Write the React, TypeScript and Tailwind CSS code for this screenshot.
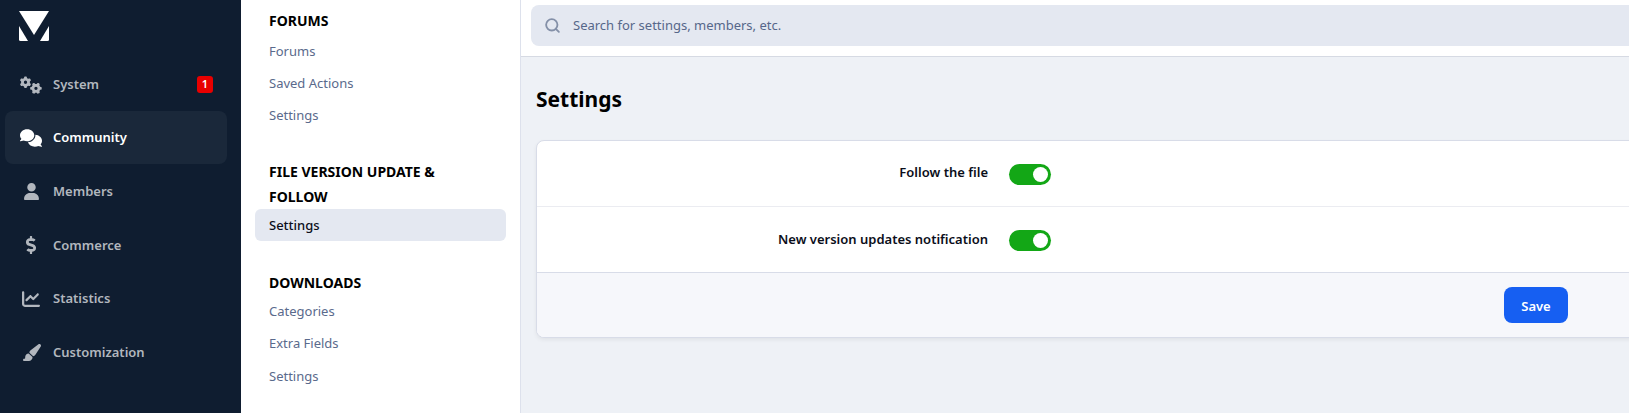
import { FaGears, FaComments, FaUser, FaChartLine, FaPaintbrush } from "react-icons/fa6";
import { FaDollarSign } from "react-icons/fa";
import { Search } from "lucide-react";
import type { ReactNode } from "react";

const font = { fontFamily: "'Noto Sans', sans-serif" };

function NavItem({ icon, label, active, badge }: { icon: ReactNode; label: string; active?: boolean; badge?: string }) {
  return (
    <div className={`mr-[14px] flex h-[53px] items-center rounded-lg pl-[8px] pr-[14px] text-[13px] font-semibold ${active ? "bg-[#1a283a] text-white" : "text-[#b2b7be]"}`}>
      <span className="flex w-[36px] items-center justify-center pt-[1px] text-[20px]">{icon}</span>
      <span className="ml-[4px] flex-1 pt-[1px]">{label}</span>
      {badge && (
        <span className="flex h-[17px] w-[16px] items-center justify-center rounded-[3px] bg-[#e80000] text-[11px] font-semibold text-white">{badge}</span>
      )}
    </div>
  );
}

function Heading({ children }: { children: ReactNode }) {
  return <div className="px-[14px] text-[14px] leading-[25px] font-bold text-black">{children}</div>;
}

function SubItem({ label, active }: { label: string; active?: boolean }) {
  return (
    <div className={`flex h-[32px] items-center rounded-md px-[14px] text-[13px] ${active ? "bg-[#e4e8f1] pt-[2px] font-medium text-[#0b0e1a]" : "pt-[1px] text-[#5a6a8c]"}`}>
      {label}
    </div>
  );
}

function Toggle() {
  return (
    <div className="mt-[1px] flex h-[21px] w-[42px] items-center justify-end rounded-full bg-[#13a716] pr-[3px]">
      <div className="h-[15px] w-[15px] rounded-full bg-white" />
    </div>
  );
}

function Row({ label, last }: { label: string; last?: boolean }) {
  return (
    <div className={`flex items-center ${last ? "h-[65px]" : "h-[66px] border-b border-[#ebecf1]"}`}>
      <div className={`w-[451px] text-right text-[13px] font-semibold text-[#0b0e1a] ${last ? "" : "pb-[1px]"}`}>{label}</div>
      <div className="ml-[21px]"><Toggle /></div>
    </div>
  );
}

export default function App() {
  return (
    <div className="flex h-[413px] w-[1629px] overflow-hidden bg-[#eef1f6]" style={font}>
      <aside className="w-[241px] shrink-0 bg-[#0f1d30] pl-[5px]">
        <div className="flex h-[57.5px] items-start pt-[11px] pl-[14px]">
          <svg width="30" height="30" viewBox="0 0 30 30">
            <path d="M0 0H30L15 24Z" fill="#fff" />
            <path d="M0 15L9 30H1.5Q0 30 0 28.5Z" fill="#fff" />
            <path d="M30 15L21 30H28.5Q30 30 30 28.5Z" fill="#fff" />
          </svg>
        </div>
        <div className="flex flex-col gap-[0.6px]">
          <NavItem icon={<FaGears className="text-[22px]" />} label="System" badge="1" />
          <NavItem icon={<FaComments className="text-[22px]" />} label="Community" active />
          <NavItem icon={<FaUser className="text-[17px]" />} label="Members" />
          <NavItem icon={<FaDollarSign className="text-[18px]" />} label="Commerce" />
          <NavItem icon={<FaChartLine className="text-[18px]" />} label="Statistics" />
          <NavItem icon={<FaPaintbrush className="text-[19px]" />} label="Customization" />
        </div>
      </aside>

      <nav className="w-[280px] shrink-0 border-r border-[#dde1ec] bg-white pt-[8px] pl-[14px] pr-[14px]">
        <Heading>FORUMS</Heading>
        <div className="mt-[2px]">
          <SubItem label="Forums" />
          <SubItem label="Saved Actions" />
          <SubItem label="Settings" />
        </div>
        <div className="mt-[28px]">
          <Heading>FILE VERSION UPDATE &amp; FOLLOW</Heading>
        </div>
        <SubItem label="Settings" active />
        <div className="mt-[29px]">
          <Heading>DOWNLOADS</Heading>
        </div>
        <div>
          <SubItem label="Categories" />
          <SubItem label="Extra Fields" />
          <div className="mt-[1px]">
            <SubItem label="Settings" />
          </div>
        </div>
      </nav>

      <main className="min-w-0 flex-1">
        <div className="h-[57px] border-b border-[#d6dae3] bg-white pt-[5px] pl-[10px]">
          <div className="flex h-[41px] w-[1200px] items-center rounded-l-lg bg-[#e4e8f1] pl-[13px] text-[13px] text-[#56678a]">
            <Search size={17} strokeWidth={2.6} className="mr-[12px] text-[#8490a8]" />
            Search for settings, members, etc.
          </div>
        </div>
        <h1 className="pt-[28px] pl-[15px] text-[21px] leading-[28px] font-bold text-black">Settings</h1>
        <div className="mt-[27px] ml-[15px] w-[1200px] overflow-hidden rounded-l-lg border border-[#d8dce8] bg-white shadow-[0_2px_4px_rgba(0,0,0,0.06)]">
          <Row label="Follow the file" />
          <Row label="New version updates notification" last />
          <div className="flex h-[65px] items-center border-t border-[#d8dce8] bg-[#f6f7fb] pl-[967px]">
            <button className="h-[36px] w-[64px] rounded-lg bg-[#165ff2] pt-[3px] text-[13px] font-semibold text-white">Save</button>
          </div>
        </div>
      </main>
    </div>
  );
}
